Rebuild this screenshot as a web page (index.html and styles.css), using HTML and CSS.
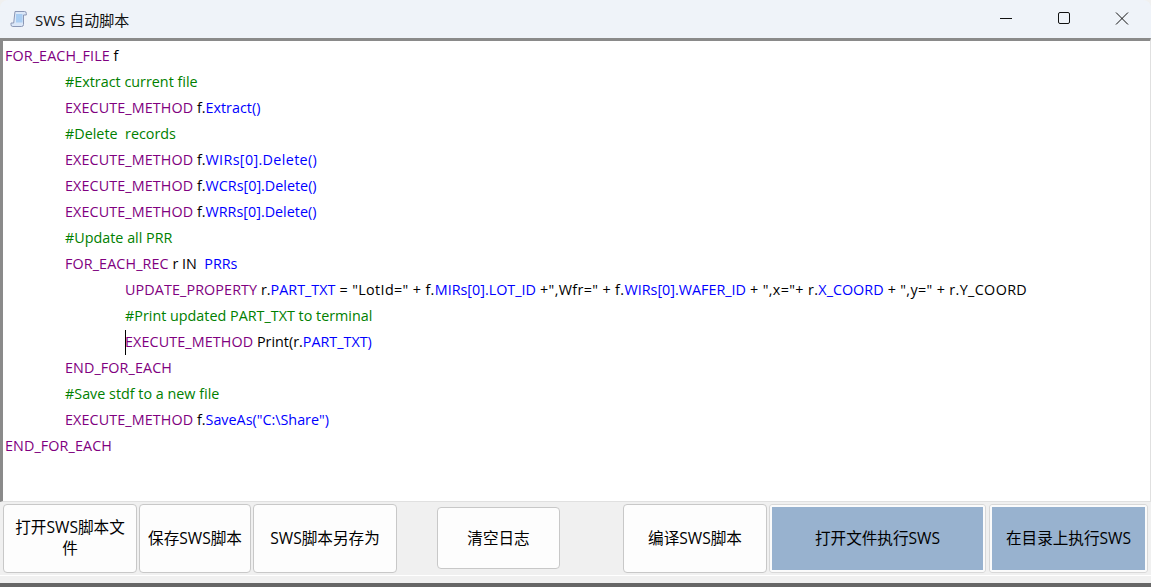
FILE: index.html
```html
<!DOCTYPE html>
<html lang="zh">
<head>
<meta charset="utf-8">
<title>SWS 自动脚本</title>
<link rel="stylesheet" href="styles.css">
</head>
<body>
<div class="window">
  <header class="titlebar">
    <svg class="app-icon" width="18" height="18" viewBox="0 0 18 18">
      <path d="M5 1.500h9.500a1.800 1.800 0 0 1 1.800 1.800V5h-2.800v9.500a2 2 0 0 1-2 2H2.800A1.800 1.800 0 0 1 1 14.700V13h2.700l1-9z" fill="#dbe7f8" stroke="#8b97b5" stroke-width="1"/>
      <rect x="6" y="4" width="6.500" height="8.500" fill="#a9cdf2"/>
    </svg>
    <span class="title">SWS 自动脚本</span>
    <div class="controls">
      <svg class="ctl" width="58" height="38" viewBox="0 0 58 38"><path d="M23 18.500h12" stroke="#111" stroke-width="1"/></svg>
      <svg class="ctl" width="58" height="38" viewBox="0 0 58 38"><rect x="23.500" y="12.500" width="11" height="11" rx="1.500" fill="none" stroke="#111" stroke-width="1"/></svg>
      <svg class="ctl" width="58" height="38" viewBox="0 0 58 38"><path d="M23 12.500l12 12M35 12.500l-12 12" stroke="#111" stroke-width="1"/></svg>
    </div>
  </header>
  <main class="editor">
    <div class="line"><span class="k">FOR_EACH_FILE</span> f</div>
    <div class="line i1"><span class="c">#Extract current file</span></div>
    <div class="line i1"><span class="k">EXECUTE_METHOD</span> f.<span class="b">Extract()</span></div>
    <div class="line i1"><span class="c">#Delete  records</span></div>
    <div class="line i1"><span class="k">EXECUTE_METHOD</span> f.<span class="b wide">WIRs[0].Delete()</span></div>
    <div class="line i1"><span class="k">EXECUTE_METHOD</span> f.<span class="b">WCRs[0].Delete()</span></div>
    <div class="line i1"><span class="k">EXECUTE_METHOD</span> f.<span class="b">WRRs[0].Delete()</span></div>
    <div class="line i1"><span class="c">#Update all PRR</span></div>
    <div class="line i1"><span class="k">FOR_EACH_REC</span> r IN  <span class="b">PRRs</span></div>
    <div class="line i2"><span class="k">UPDATE_PROPERTY</span> r.<span class="b">PART_TXT</span><span class="op"> = "LotId=" + f.</span><span class="b">MIRs[0].LOT_ID</span><span class="op"> +",Wfr=" + f.</span><span class="b">WIRs[0].WAFER_ID</span><span class="op"> + ",x="+ r.</span><span class="b">X_COORD</span><span class="op"> + ",y=" + r.Y_COORD</span></div>
    <div class="line i2"><span class="c">#Print updated PART_TXT to terminal</span></div>
    <div class="line i2"><span class="caret"></span><span class="k">EXECUTE_METHOD</span> Print(r.<span class="b">PART_TXT)</span></div>
    <div class="line i1"><span class="k">END_FOR_EACH</span></div>
    <div class="line i1"><span class="c">#Save stdf to a new file</span></div>
    <div class="line i1"><span class="k">EXECUTE_METHOD</span> f.<span class="b">SaveAs("C:\Share")</span></div>
    <div class="line"><span class="k">END_FOR_EACH</span></div>
  </main>
  <section class="toolbar">
    <button class="btn w-open">打开SWS脚本文件</button>
    <button class="btn w-save">保存SWS脚本</button>
    <button class="btn w-saveas">SWS脚本另存为</button>
    <button class="btn w-clear">清空日志</button>
    <button class="btn w-compile">编译SWS脚本</button>
    <button class="btn run w-runfile">打开文件执行SWS</button>
    <button class="btn run w-rundir">在目录上执行SWS</button>
  </section>
  <footer class="statusline"></footer>
</div>
</body>
</html>
```
FILE: styles.css
```css
* { box-sizing: border-box; }
html, body { margin: 0; height: 100%; background: #f0f0f0; overflow: hidden; }
body { font-family: "Open Sans", "Noto Sans CJK SC", sans-serif; color: #000; }
.window { display: flex; flex-direction: column; height: 587px; }
.titlebar { display: flex; align-items: center; height: 38px; flex: none; background: #eff3f9; padding-left: 10px; border-radius: 8px 8px 0 0; }
.app-icon { flex: none; }
.title { margin-left: 7px; font-size: 15px; color: #111; }
.controls { margin-left: auto; display: flex; }
.ctl { display: block; }
.editor { height: 464px; flex: none; background: #fff; border: 3px solid #8a8a8a; border-right: 1px solid #e0e0e0; border-bottom: 1px solid #e0e0e0; padding: 2px 2px 0; font-size: 14.35px; }
.line { height: 26px; line-height: 26px; white-space: pre; }
.i1 { padding-left: 60px; }
.i2 { padding-left: 120px; position: relative; }
.k { color: #800080; letter-spacing: .1px; }
.c { color: #008000; }
.b { color: #0000ff; }
.wide { letter-spacing: .35px; }
.op { letter-spacing: .36px; }
.caret { position: absolute; left: 120px; top: 1px; width: 1px; height: 25px; background: #000; }
.toolbar { flex: none; display: flex; align-items: center; height: 70px; padding-left: 3px; margin-top: 1px; background: #f0f0f0; }
.btn { flex: none; height: 69px; border: 1px solid #c8c8c8; border-radius: 4px; background: #fdfdfd; font: 15.600px/21px "Open Sans", "Noto Sans CJK SC", sans-serif; color: #000; padding: 0 9px; margin-right: 2px; }
.w-open { width: 134px; }
.w-save { width: 112px; padding: 0 4px; }
.w-saveas { width: 144px; padding: 0 4px; }
.w-clear { width: 123px; height: 62px; margin-left: 38px; margin-right: 63px; }
.w-compile { width: 144px; margin-right: 2px; }
.run { background: #98b2cf; border: 3px solid #fbfbfb; outline: 1px solid #d8d8d8; outline-offset: -1px; border-radius: 3px; }
.w-runfile { width: 217px; margin-right: 3px; }
.w-rundir { width: 159px; padding: 0 4px; }
.statusline { flex: 1; background: #f0f0f0; border-top: 1px solid #fff; margin-top: 2px; border-bottom: 4px solid #666; }
```
